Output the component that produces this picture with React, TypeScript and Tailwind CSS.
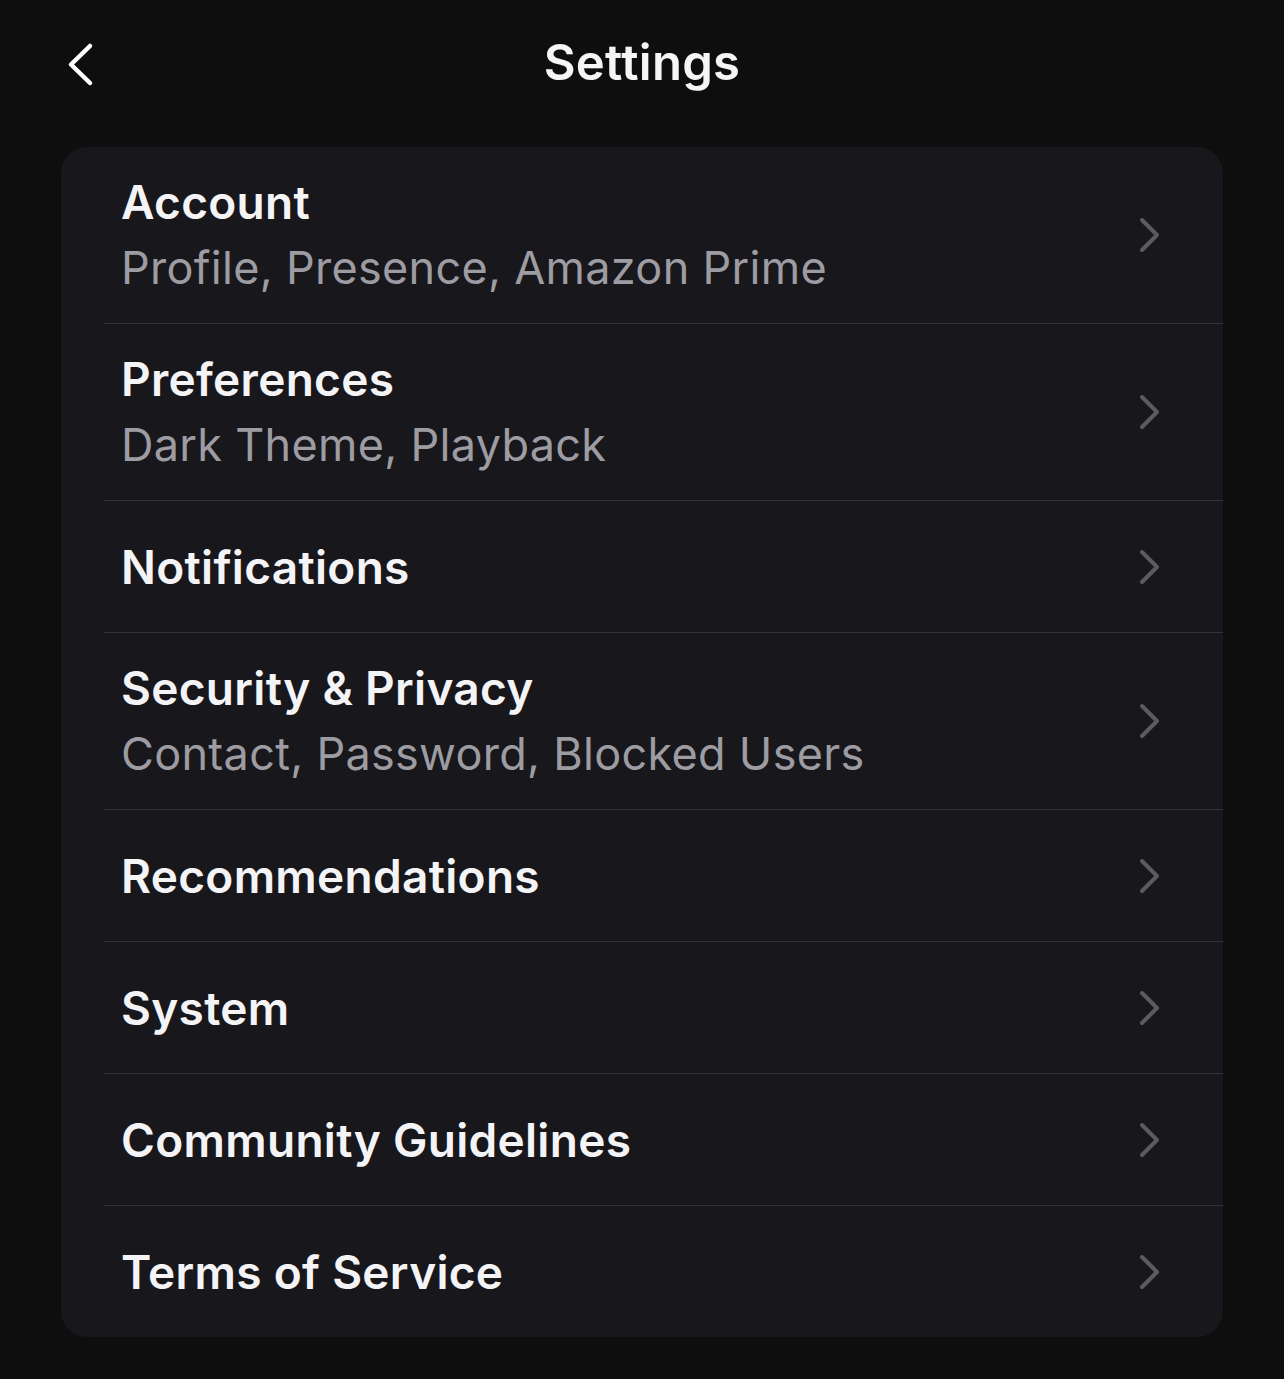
type Item = {
  title: string
  subtitle?: string
}

const items: Item[] = [
  { title: 'Account', subtitle: 'Profile, Presence, Amazon Prime' },
  { title: 'Preferences', subtitle: 'Dark Theme, Playback' },
  { title: 'Notifications' },
  { title: 'Security & Privacy', subtitle: 'Contact, Password, Blocked Users' },
  { title: 'Recommendations' },
  { title: 'System' },
  { title: 'Community Guidelines' },
  { title: 'Terms of Service' },
]

function RowChevron() {
  return (
    <svg width="24" height="38" viewBox="0 0 24 38" fill="none" className="shrink-0">
      <path
        d="M4 4 L19 19 L4 34"
        stroke="#5c5b61"
        strokeWidth="4"
        strokeLinecap="round"
        strokeLinejoin="round"
      />
    </svg>
  )
}

function BackChevron() {
  return (
    <svg width="32" height="46" viewBox="0 0 32 46" fill="none">
      <path
        d="M27 4 L8 22.5 L27 41"
        stroke="#ffffff"
        strokeWidth="4.5"
        strokeLinecap="round"
        strokeLinejoin="round"
      />
    </svg>
  )
}

function SettingsRow({ item, first }: { item: Item; first: boolean }) {
  return (
    <div className="pl-[43px]">
      <div
        className={
          'flex items-center pr-[61px] ' +
          (first ? '' : 'border-t border-[#333238] ') +
          (item.subtitle ? (first ? 'h-[176px]' : 'h-[177px]') : 'h-[132px]')
        }
      >
        <div className="flex-1 pl-[17px]">
          <div className="text-[46px] leading-[52px] font-semibold text-[#f4f4f6] tracking-[0.3px]">
            {item.title}
          </div>
          {item.subtitle && (
            <div className="mt-[14px] text-[45px] leading-[52px] text-[#9d9ca2] tracking-[0.3px]">
              {item.subtitle}
            </div>
          )}
        </div>
        <RowChevron />
      </div>
    </div>
  )
}

export default function App() {
  return (
    <div
      className="min-h-[1379px] w-full bg-[#0e0e0f] pb-[42px]"
      style={{ fontFamily: 'Inter, "Noto Sans", sans-serif' }}
    >
      <header className="relative flex h-[147px] items-start justify-center pt-[32px]">
        <button className="absolute left-[63px] top-[42px]">
          <BackChevron />
        </button>
        <h1 className="text-[49px] leading-[62px] font-semibold text-[#f5f5f7] tracking-[0.3px]">Settings</h1>
      </header>
      <div className="mx-[61px] overflow-hidden rounded-[26px] bg-[#18171c]">
        {items.map((item, i) => (
          <SettingsRow key={item.title} item={item} first={i === 0} />
        ))}
      </div>
    </div>
  )
}
